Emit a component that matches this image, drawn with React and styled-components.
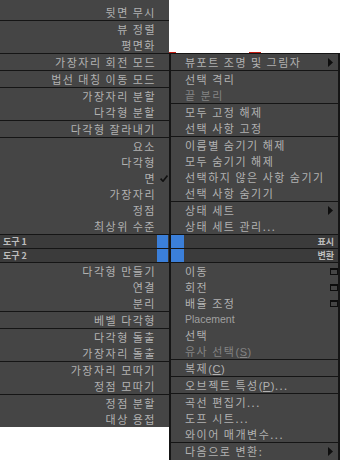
import React from 'react';
import styled, { createGlobalStyle } from 'styled-components';

const GlobalStyle = createGlobalStyle`
  html, body {
    margin: 0;
    padding: 0;
    background: #ffffff;
  }
  body {
    font-family: "Noto Sans CJK KR", "Noto Sans", sans-serif;
  }
`;

const Screen = styled.div`
  width: 340px;
  height: 460px;
  overflow: hidden;
  display: flex;
  background: #ffffff;
`;

const LeftPanel = styled.div`
  align-self: flex-start;
  width: 169px;
  flex-shrink: 0;
  padding-top: 4px;
  background: #454545;
`;

const RightColumn = styled.div`
  flex: 1;
  min-width: 0;
  margin-top: 52px;
  display: flex;
  flex-direction: column;
`;

// the little red flicker on top of the right quad
const Marks = styled.div`
  height: 1px;
  display: flex;
`;

const Mark = styled.span`
  width: ${(p) => p.$w}px;
  margin-left: ${(p) => p.$gap}px;
  background: #c41a10;
`;

const RightPanel = styled.div`
  flex: 1;
  background: #454545;
  border-left: 2px solid #151515;
  border-right: 2px solid #151515;
`;

const Section = styled.div`
  border-top: ${(p) => (p.$open ? 'none' : '1px solid #151515')};
`;

const LeftRow = styled.div`
  height: 16px;
  display: flex;
  align-items: center;
  justify-content: flex-end;
`;

const RightRow = styled.div`
  height: 16px;
  display: flex;
  align-items: center;
  padding-left: 14px;
`;

const Label = styled.span`
  font-size: 11px;
  letter-spacing: 1.5px;
  line-height: 16px;
  white-space: nowrap;
  color: ${(p) => (p.$dim ? '#838383' : '#b2b2b2')};
`;

const RightLabel = styled(Label)`
  flex: 1;
  min-width: 0;
`;

const Latin = styled.span`
  flex: 1;
  font-family: "Liberation Sans", Arial, sans-serif;
  font-size: 10.5px;
  line-height: 16px;
  color: #a0a0a0;
`;

const Key = styled.span`
  font-family: "Liberation Sans", Arial, sans-serif;
  font-size: 11px;
  letter-spacing: 0.5px;
  text-decoration: underline;
`;

const Paren = styled.span`
  font-family: "Liberation Sans", Arial, sans-serif;
  font-size: 11px;
  letter-spacing: 0.5px;
`;

const CheckSlot = styled.span`
  flex-shrink: 0;
  width: 13px;
  height: 16px;
  display: flex;
  align-items: center;
  justify-content: flex-end;
  padding-right: 1px;
  box-sizing: border-box;
`;

const IconSlot = styled.span`
  flex-shrink: 0;
  width: 12px;
  height: 16px;
  display: flex;
  align-items: center;
  justify-content: flex-end;
  padding-right: ${(p) => (p.$arrow ? 5 : 0)}px;
  box-sizing: border-box;

  svg {
    flex-shrink: 0;
  }
`;

const Header = styled.div`
  height: 13px;
  display: flex;
  align-items: stretch;
  background: #3b3b3b;
`;

const HeaderText = styled.span`
  flex: 1;
  font-size: 9px;
  font-weight: 700;
  line-height: 13px;
  color: #bdbdbd;
  padding: 0 ${(p) => (p.$right ? 4 : 0)}px 0 ${(p) => (p.$right ? 0 : 3)}px;
  text-align: ${(p) => (p.$right ? 'right' : 'left')};
`;

const Swatch = styled.span`
  flex-shrink: 0;
  width: ${(p) => p.$w}px;
  margin-right: ${(p) => p.$mr || 0}px;
  background: #3b7fd9;
`;

const Check = () => (
  <svg width="8" height="7" viewBox="0 0 8 7">
    <polyline points="0.6,3.6 3,6.2 7.4,0.6" fill="none" stroke="#111" strokeWidth="1.6" />
  </svg>
);

const Arrow = () => (
  <svg width="5" height="9" viewBox="0 0 5 9">
    <polygon points="0,0 5,4.5 0,9" fill="#0d0d0d" />
  </svg>
);

const OptionBox = () => (
  <svg width="8" height="7" viewBox="0 0 8 7">
    <rect x="0.5" y="0.5" width="7" height="6" fill="none" stroke="#0d0d0d" />
    <rect x="0" y="0" width="8" height="2" fill="#0d0d0d" />
  </svg>
);

const leftTop = [
  ['뒷면 무시'],
  ['뷰 정렬', '평면화'],
  ['가장자리 회전 모드'],
  ['법선 대칭 이동 모드'],
  ['가장자리 분할', '다각형 분할'],
  ['다각형 잘라내기'],
  ['요소', '다각형', { label: '면', checked: true }, '가장자리', '정점', '최상위 수준'],
];

const leftBottom = [
  ['다각형 만들기', '연결', '분리'],
  ['베벨 다각형'],
  ['다각형 돌출', '가장자리 돌출'],
  ['가장자리 모따기', '정점 모따기'],
  ['정점 분할', '대상 용접'],
];

const rightTop = [
  [{ label: '뷰포트 조명 및 그림자', arrow: true }],
  ['선택 격리', { label: '끝 분리', dim: true }],
  ['모두 고정 해제', '선택 사항 고정'],
  ['이름별 숨기기 해제', '모두 숨기기 해제', '선택하지 않은 사항 숨기기', '선택 사항 숨기기'],
  [{ label: '상태 세트', arrow: true }, '상태 세트 관리...'],
];

const rightBottom = [
  [
    { label: '이동', box: true },
    { label: '회전', box: true },
    { label: '배율 조정', box: true },
    { label: 'Placement', latin: true },
    '선택',
    { label: '유사 선택', key: 'S', dim: true },
  ],
  [{ label: '복제', key: 'C' }],
  [{ label: '오브젝트 특성', key: 'P', tail: '...' }],
  ['곡선 편집기...', '도프 시트...', '와이어 매개변수...'],
  [{ label: '다음으로 변환:', arrow: true }],
];

const norm = (item) => (typeof item === 'string' ? { label: item } : item);

function LeftSections({ sections, openFirst }) {
  return sections.map((rows, i) => (
    <Section key={i} $open={openFirst && i === 0}>
      {rows.map(norm).map((item) => (
        <LeftRow key={item.label}>
          <Label>{item.label}</Label>
          <CheckSlot>{item.checked && <Check />}</CheckSlot>
        </LeftRow>
      ))}
    </Section>
  ));
}

function RightSections({ sections }) {
  return sections.map((rows, i) => (
    <Section key={i}>
      {rows.map(norm).map((item) => (
        <RightRow key={item.label}>
          {item.latin ? (
            <Latin>{item.label}</Latin>
          ) : (
            <RightLabel $dim={item.dim}>
              {item.label}
              {item.key && (
                <>
                  <Paren>(</Paren>
                  <Key>{item.key}</Key>
                  <Paren>)</Paren>
                </>
              )}
              {item.tail}
            </RightLabel>
          )}
          <IconSlot $arrow={item.arrow}>
            {item.arrow && <Arrow />}
            {item.box && <OptionBox />}
          </IconSlot>
        </RightRow>
      ))}
    </Section>
  ));
}

export default function App() {
  return (
    <>
      <GlobalStyle />
      <Screen>
        <LeftPanel>
          <LeftSections sections={leftTop} openFirst />
          <Section>
            <Header>
              <HeaderText>도구 1</HeaderText>
              <Swatch $w={11} $mr={1} />
            </Header>
          </Section>
          <Section>
            <Header>
              <HeaderText>도구 2</HeaderText>
              <Swatch $w={11} $mr={1} />
            </Header>
          </Section>
          <LeftSections sections={leftBottom} />
        </LeftPanel>
        <RightColumn>
          <Marks>
            <Mark $w={7} $gap={0} />
            <Mark $w={12} $gap={73} />
          </Marks>
          <RightPanel>
            <RightSections sections={rightTop} />
            <Section>
              <Header>
                <Swatch $w={13} />
                <HeaderText $right>표시</HeaderText>
              </Header>
            </Section>
            <Section>
              <Header>
                <Swatch $w={13} />
                <HeaderText $right>변환</HeaderText>
              </Header>
            </Section>
            <RightSections sections={rightBottom} />
          </RightPanel>
        </RightColumn>
      </Screen>
    </>
  );
}
